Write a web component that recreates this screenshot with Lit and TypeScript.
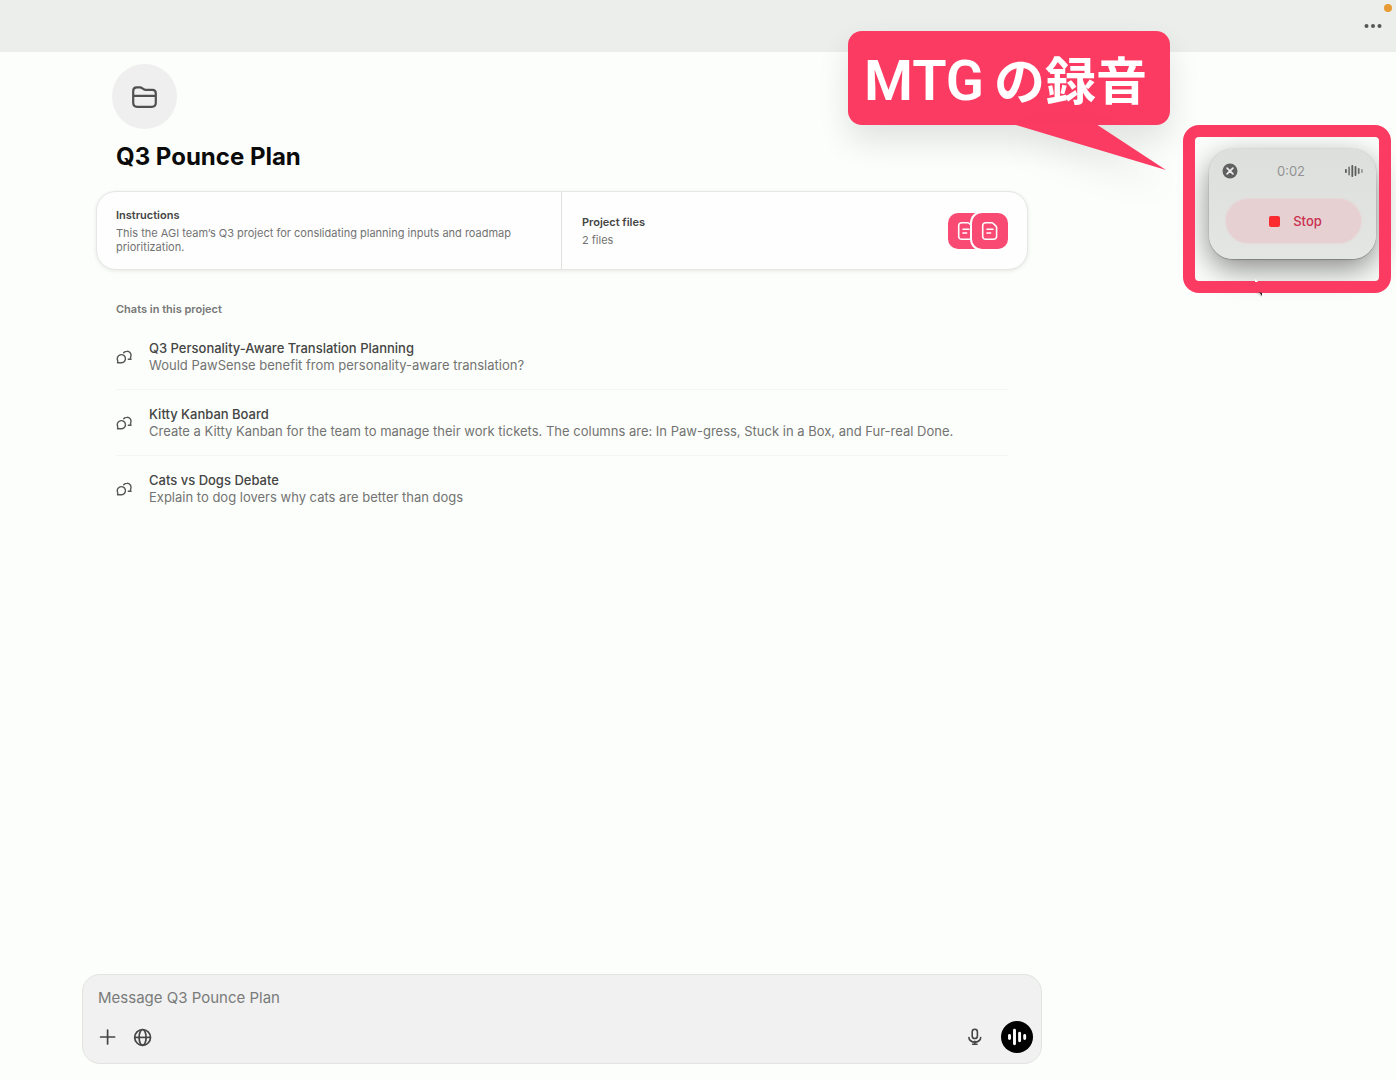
import { LitElement, html, css, svg } from "lit";
import { customElement, state } from "lit/decorators.js";

interface Chat {
  title: string;
  preview: string;
}

const CHATS: Chat[] = [
  {
    title: "Q3 Personality-Aware Translation Planning",
    preview: "Would PawSense benefit from personality-aware translation?",
  },
  {
    title: "Kitty Kanban Board",
    preview:
      "Create a Kitty Kanban for the team to manage their work tickets. The columns are: In Paw-gress, Stuck in a Box, and Fur-real Done.",
  },
  {
    title: "Cats vs Dogs Debate",
    preview: "Explain to dog lovers why cats are better than dogs",
  },
];

const folderIcon = html`<svg class="icon" width="28" height="28" viewBox="0 0 28 28" aria-hidden="true">
  <path
    d="M2.200 8c0-2.200 1.300-3.600 3.500-3.600h3.200c1 0 1.700.3 2.500.9l1.200.9c.6.500 1.200.7 2 .7h6.700c2.200 0 3.500 1.300 3.500 3.500v9.400c0 2.600-1.500 4-4 4H6.200c-2.500 0-4-1.400-4-4z M2.200 12.800h22.600"
    fill="none" stroke="currentColor" stroke-width="2.200" stroke-linejoin="round" />
</svg>`;

const docIcon = html`<svg class="icon" width="18" height="20" viewBox="0 0 18 20" aria-hidden="true">
  <path
    d="M5 1.700h5.600c.6 0 1 .2 1.400.6l3 2.900c.4.400.6.800.6 1.400v8.400c0 2.200-1.100 3.300-3.300 3.300H5c-2.200 0-3.300-1.100-3.300-3.300V5c0-2.200 1.100-3.300 3.300-3.300z M6 8.200h6 M6 12h3.600"
    fill="none" stroke="#fff" stroke-width="1.600" stroke-linecap="round" stroke-linejoin="round" />
</svg>`;

const chatsIcon = html`<svg class="icon" width="16" height="16" viewBox="0 0 16 16" aria-hidden="true">
  <g fill="none" stroke="currentColor" stroke-width="1.400" stroke-linecap="round" stroke-linejoin="round">
    <path d="M1.500 13.800c.4-.8.400-1.500.1-2.400a4.100 4.100 0 1 1 4 2.400z" />
    <path d="M7.700 3.800c.8-1 1.900-1.600 3.200-1.600a4 4 0 0 1 3.800 5.500c-.3.900-.2 1.700.3 2.600h-2.700" />
  </g>
</svg>`;

const plusIcon = html`<svg class="icon" width="20" height="20" viewBox="0 0 20 20" aria-hidden="true">
  <path d="M9.600 3v14M2.600 10h14" stroke="currentColor" stroke-width="1.700" stroke-linecap="round" />
</svg>`;

const globeIcon = html`<svg class="icon" width="20" height="20" viewBox="0 0 20 20" aria-hidden="true">
  <g fill="none" stroke="currentColor" stroke-width="1.700">
    <circle cx="9.600" cy="10.400" r="7.900" />
    <ellipse cx="9.600" cy="10.400" rx="3.500" ry="7.900" />
    <path d="M1.700 10.400h15.800" />
  </g>
</svg>`;

const micIcon = html`<svg class="icon" width="20" height="20" viewBox="0 0 20 20" aria-hidden="true">
  <g fill="none" stroke="currentColor" stroke-width="1.600" stroke-linecap="round">
    <rect x="6.200" y="2.300" width="5.200" height="9.200" rx="2.600" />
    <path d="M2.900 10.500a5.900 4.600 0 0 0 11.800 0M8.800 14.300v2.800M6.600 17.200h4.400" />
  </g>
</svg>`;

const voiceIcon = html`<svg class="icon" width="20" height="20" viewBox="0 0 20 20" aria-hidden="true">
  <path d="M2.500 8.400v3.200M7.500 3.300v13.400M12.600 6.300v7.400M17.700 8.400v3.200" stroke="#fff" stroke-width="2.900" stroke-linecap="round" />
</svg>`;

const closeIcon = html`<svg class="icon" width="16" height="16" viewBox="0 0 16 16" aria-hidden="true">
  <circle cx="8" cy="8" r="7.500" fill="#5f605f" />
  <path d="M5.100 5.100l5.800 5.800M10.900 5.100l-5.800 5.800" stroke="#e9eae9" stroke-width="1.800" stroke-linecap="round" />
</svg>`;

const LEVELS = [
  { h: 4, c: "#5c5d5c" },
  { h: 9, c: "#7c7d7c" },
  { h: 12, c: "#5c5d5c" },
  { h: 10, c: "#5c5d5c" },
  { h: 6, c: "#6c6d6c" },
  { h: 4, c: "#9a9b9a" },
];

const levelIcon = html`<svg class="icon" width="20" height="14" viewBox="0 0 20 14" aria-hidden="true">
  ${LEVELS.map(
    (l, i) => svg`<rect x=${1 + i * 3.2} y=${7 - l.h / 2} width="1.800" height=${l.h} rx="0.800" fill=${l.c} />`,
  )}
</svg>`;

@customElement("recorder-panel")
export class RecorderPanel extends LitElement {
  @state() private elapsed = 2;

  static styles = css`
    :host {
      display: block;
      box-sizing: border-box;
      width: 167px;
      padding: 14px 12px 16px 13px;
      border-radius: 24px;
      background: linear-gradient(#dddfdd, #e4e6e4);
      box-shadow:
        0 0 1px rgba(0, 0, 0, 0.4),
        0 1px 1px rgba(0, 0, 0, 0.2),
        0 10px 30px rgba(0, 0, 0, 0.46);
      font-family: Inter, "Liberation Sans", sans-serif;
    }
    .top {
      display: flex;
      align-items: center;
      justify-content: space-between;
      height: 16px;
    }
    .icon {
      display: block;
    }
    button {
      border: 0;
      padding: 0;
      background: none;
      font: inherit;
      cursor: pointer;
    }
    .time {
      font-size: 13px;
      line-height: 16px;
      color: #929392;
    }
    .stop {
      display: flex;
      align-items: center;
      justify-content: center;
      gap: 13px;
      width: 100%;
      height: 44px;
      margin-top: 20px;
      padding-left: 4px;
      border-radius: 22px;
      background: #e6d0d1;
      box-shadow: 0 0 3px #e6d0d1;
      color: #c9304f;
      font-size: 13px;
      font-weight: 500;
    }
    .pill {
      padding: 0 3px 0 4px;
    }
    .square {
      width: 11px;
      height: 11px;
      border-radius: 2px;
      background: #fb2c2f;
    }
  `;

  render() {
    const seconds = String(this.elapsed % 60).padStart(2, "0");
    return html`
      <div class="top">
        <button aria-label="Close">${closeIcon}</button>
        <span class="time">${Math.floor(this.elapsed / 60)}:${seconds}</span>
        ${levelIcon}
      </div>
      <div class="pill">
        <button class="stop"><span class="square"></span>Stop</button>
      </div>
    `;
  }
}

@customElement("app-root")
export class AppRoot extends LitElement {
  static styles = css`
    :host {
      display: flex;
      flex-direction: column;
      position: relative;
      box-sizing: border-box;
      min-height: 100vh;
      overflow: hidden;
      background: #fcfefb;
      color: #4a4b4a;
      font-family: Inter, "Liberation Sans", sans-serif;
    }
    * {
      box-sizing: border-box;
    }
    h1,
    h2,
    h3,
    p,
    ul {
      margin: 0;
      padding: 0;
    }
    button {
      display: grid;
      place-items: center;
      border: 0;
      padding: 0;
      background: none;
      color: inherit;
      font: inherit;
      cursor: pointer;
    }
    .icon {
      display: block;
    }
    .topbar {
      display: flex;
      justify-content: flex-end;
      align-items: center;
      height: 52px;
      padding: 0 13px;
      background: #eceeec;
    }
    .more {
      width: 20px;
      height: 20px;
      color: #555655;
    }
    .alert {
      position: absolute;
      top: 4px;
      right: 4px;
      width: 8px;
      height: 8px;
      border-radius: 50%;
      background: #e89a35;
    }
    .main {
      flex: 1;
      display: flex;
      flex-direction: column;
      width: 100%;
      padding: 12px 272px 16px 0;
    }
    .column {
      flex: 1;
      display: flex;
      flex-direction: column;
      width: 100%;
      max-width: 960px;
      margin: 0 auto;
    }
    .project {
      padding: 0 14px;
    }
    .head {
      padding: 0 16px;
    }
    .badge {
      display: grid;
      place-items: center;
      width: 65px;
      height: 65px;
      border-radius: 50%;
      background: #eeefee;
      color: #4f504f;
    }
    .title {
      padding-left: 4px;
      margin-top: 12px;
      font-size: 24px;
      line-height: 32px;
      font-weight: 700;
      color: #0a0b0a;
    }
    .cards {
      display: grid;
      grid-template-columns: 1fr 1fr;
      margin-top: 18px;
      min-height: 79px;
      border: 1px solid #e6e7e5;
      border-radius: 20px;
      background: #fefefe;
      box-shadow: 0 1px 4px rgba(0, 0, 0, 0.09);
    }
    .card {
      display: flex;
      align-items: center;
      justify-content: space-between;
      padding: 0 19px;
    }
    .card:first-child {
      border-right: 1px solid #e0e1df;
    }
    .card:last-child {
      padding-left: 20px;
    }
    .label {
      font-size: 11px;
      line-height: 16px;
      font-weight: 600;
      color: #444544;
    }
    .detail {
      margin-top: 3px;
      font-size: 11px;
      line-height: 14px;
      color: #727372;
    }
    .files {
      display: flex;
    }
    .file {
      display: grid;
      place-items: center;
      width: 36px;
      height: 36px;
      border-radius: 10px;
      background: #f84a73;
    }
    .file + .file {
      margin-left: -12px;
      box-shadow: 0 0 0 2px #fff;
    }
    .section {
      margin-top: 31px;
      padding: 0 20px;
      font-size: 11px;
      line-height: 16px;
      font-weight: 600;
      color: #767776;
    }
    .chats {
      margin-top: 6px;
      padding: 0 20px;
      list-style: none;
    }
    .chat {
      display: flex;
      align-items: center;
      gap: 17px;
      height: 66px;
      border-top: 1px solid transparent;
      color: #555655;
      text-decoration: none;
    }
    li + li .chat {
      border-top-color: #f5f6f4;
    }
    .name {
      font-size: 13px;
      line-height: 17px;
      font-weight: 500;
      color: #444544;
    }
    .preview {
      font-size: 13px;
      line-height: 17px;
      color: #727372;
    }
    .composer {
      height: 90px;
      margin-top: auto;
      padding: 11px 8px 10px 15px;
      border: 1px solid #e3e4e2;
      border-radius: 18px;
      background: #f0f1f0;
    }
    .message {
      display: block;
      width: 100%;
      height: 24px;
      padding: 0;
      border: 0;
      outline: 0;
      background: none;
      font: 15px/24px Inter, "Liberation Sans", sans-serif;
      color: #333;
    }
    .message::placeholder {
      color: #7a7b7a;
      opacity: 1;
    }
    .tools {
      display: flex;
      align-items: center;
      gap: 15px;
      margin-top: 11px;
      height: 32px;
      color: #444544;
    }
    .spacer {
      flex: 1;
    }
    .voice {
      width: 32px;
      height: 32px;
      border-radius: 50%;
      background: #000;
    }
    .panel {
      position: absolute;
      top: 149px;
      right: 20px;
    }
    .frame {
      position: absolute;
      top: 125px;
      right: 5px;
      width: 208px;
      height: 168px;
      border: 12px solid #fb3b62;
      border-radius: 16px;
      pointer-events: none;
    }
    .pointer {
      position: absolute;
      top: 279px;
      right: 132px;
    }
    .callout {
      position: absolute;
      top: 31px;
      right: 226px;
      display: flex;
      align-items: baseline;
      gap: 10px;
      width: 322px;
      height: 94px;
      padding: 0 16px;
      border-radius: 14px;
      background: #fb3b62;
      box-shadow: 0 16px 32px rgba(0, 0, 0, 0.11);
      color: #fff;
      font: 700 51px/94px "Noto Sans CJK JP", sans-serif;
      white-space: nowrap;
    }
    .latin {
      font: 600 56px/94px Roboto, sans-serif;
    }
    .tail {
      position: absolute;
      top: 93px;
      right: 4px;
      filter: drop-shadow(0 16px 16px rgba(0, 0, 0, 0.08));
    }
  `;

  private renderChat(chat: Chat) {
    return html`<li>
      <a class="chat" href="#">
        ${chatsIcon}
        <div>
          <h3 class="name">${chat.title}</h3>
          <p class="preview">${chat.preview}</p>
        </div>
      </a>
    </li>`;
  }

  render() {
    return html`
      <header class="topbar">
        <button class="more" aria-label="More options">
          <svg class="icon" width="20" height="20" viewBox="0 0 20 20" fill="currentColor" aria-hidden="true">
            <circle cx="3.500" cy="10" r="2" />
            <circle cx="10" cy="10" r="2" />
            <circle cx="16.500" cy="10" r="2" />
          </svg>
        </button>
        <span class="alert"></span>
      </header>
      <main class="main">
        <div class="column">
          <div class="project">
            <div class="head">
              <div class="badge">${folderIcon}</div>
              <h1 class="title">Q3 Pounce Plan</h1>
            </div>
            <div class="cards">
              <section class="card">
                <div>
                  <h2 class="label">Instructions</h2>
                  <p class="detail">
                    This the AGI team’s Q3 project for conslidating planning inputs and roadmap prioritization.
                  </p>
                </div>
              </section>
              <section class="card">
                <div>
                  <h2 class="label">Project files</h2>
                  <p class="detail">2 files</p>
                </div>
                <div class="files">
                  <span class="file">${docIcon}</span>
                  <span class="file">${docIcon}</span>
                </div>
              </section>
            </div>
            <h2 class="section">Chats in this project</h2>
            <ul class="chats">
              ${CHATS.map((chat) => this.renderChat(chat))}
            </ul>
          </div>
          <form class="composer">
            <input class="message" type="text" aria-label="Message" placeholder="Message Q3 Pounce Plan" />
            <div class="tools">
              <button type="button" aria-label="Add">${plusIcon}</button>
              <button type="button" aria-label="Search the web">${globeIcon}</button>
              <span class="spacer"></span>
              <button type="button" aria-label="Dictate">${micIcon}</button>
              <button type="button" class="voice" aria-label="Voice mode">${voiceIcon}</button>
            </div>
          </form>
        </div>
      </main>
      <recorder-panel class="panel"></recorder-panel>
      <div class="frame"></div>
      <svg class="pointer" width="10" height="18" viewBox="0 0 10 18" aria-hidden="true">
        <path d="M1 0v3h3z" fill="#fff" />
        <path d="M1 14h5l2 3-1 1-2-2z" fill="#ddd" />
        <path d="M5 13l3 1v3z" fill="#222" />
      </svg>
      <div class="callout">
        <span class="latin">MTG</span><span>の録音</span>
        <svg class="tail" width="150" height="46" viewBox="0 0 150 46" aria-hidden="true">
          <path d="M0 0h80L150 46L0 1z" fill="#fb3b62" />
        </svg>
      </div>
    `;
  }
}
